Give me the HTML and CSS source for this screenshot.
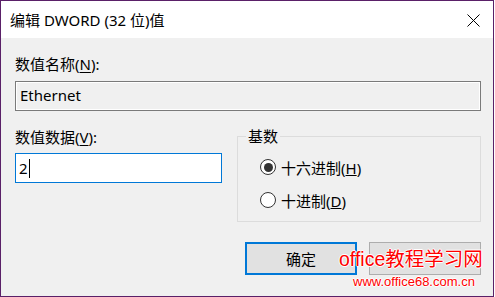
FILE: index.html
```html
<!DOCTYPE html>
<html lang="zh-CN">
<head>
<meta charset="utf-8">
<title>编辑 DWORD (32 位)值</title>
<link rel="stylesheet" href="styles.css">
</head>
<body>
<div class="window">
  <div class="titlebar">
    <span class="title">编辑 DWORD (32 位)值</span>
    <svg class="close" width="13" height="13" viewBox="0 0 13 13"><path d="M0.5 0.5 L12.5 12.5 M12.5 0.5 L0.5 12.5" stroke="#000" stroke-width="1" fill="none"/></svg>
  </div>
  <div class="content">
    <div class="label">数值名称(<u>N</u>):</div>
    <div class="namebox">Ethernet</div>
    <div class="row">
      <div class="left">
        <div class="label label2">数值数据(<u>V</u>):</div>
        <div class="input"><span>2</span><span class="caret"></span></div>
      </div>
      <fieldset class="group">
        <legend>基数</legend>
        <div class="radio"><span class="dot checked"></span><span>十六进制(<u>H</u>)</span></div>
        <div class="radio"><span class="dot"></span><span>十进制(<u>D</u>)</span></div>
      </fieldset>
    </div>
    <div class="buttons">
      <div class="btn primary">确定</div>
      <div class="btn"></div>
    </div>
  </div>
  <div class="watermark">
    <div class="wm1">office教程学习网</div>
    <div class="wm2">www.office68.com.cn</div>
  </div>
</div>
</body>
</html>
```
FILE: styles.css
```css
* { box-sizing: border-box; }
html, body { margin: 0; padding: 0; background: #fff; }
body {
  font-family: "Noto Sans", "Noto Sans CJK SC", sans-serif;
  font-size: 15px;
  color: #000;
}
.window {
  position: relative;
  width: 494px;
  height: 297px;
  border: 1px solid #5a2068;
  display: flex;
  flex-direction: column;
  background: #f0f0f0;
}
.titlebar {
  height: 37px;
  flex: none;
  background: #fff;
  display: flex;
  align-items: center;
  justify-content: space-between;
  padding: 0 13px 0 9px;
}
.title { line-height: 20px; }
.close { display: block; margin-top: 1px; }
.content {
  flex: 1;
  padding: 16px 12px 0 14px;
  display: flex;
  flex-direction: column;
}
.label { line-height: 20px; height: 20px; }
.label u { text-underline-offset: 2px; }
.namebox {
  margin-top: 7px;
  height: 30px;
  border: 1px solid #7a7a7a;
  box-shadow: inset 0 0 0 1px #fff;
  background: #f0f0f0;
  padding-left: 4px;
  line-height: 26px;
}
.row {
  margin-top: 16px;
  display: grid;
  grid-template-columns: 207px 244px;
  column-gap: 15px;
}
.input {
  margin-top: 6px;
  height: 30px;
  border: 1px solid #0078d7;
  background: #fff;
  padding-left: 3px;
  display: flex;
  align-items: center;
}
.caret {
  display: inline-block;
  width: 1px;
  height: 19px;
  background: #000;
  margin-left: 1px;
}
.group {
  margin: -1px 0 0 0;
  padding: 0 0 0 22px;
  height: 96px;
  border: 1px solid #dcdcdc;
  min-width: 0;
}
.group legend {
  padding: 0 2px;
  line-height: 20px;
  margin-left: -14px;
}
.radio {
  display: flex;
  align-items: center;
  height: 20px;
  gap: 5px;
}
.radio:first-of-type { margin-top: 11px; }
.radio + .radio { margin-top: 13px; }
.dot {
  width: 16px;
  height: 16px;
  border-radius: 50%;
  border: 1px solid #333;
  background: #fff;
  display: inline-flex;
  align-items: center;
  justify-content: center;
}
.dot.checked::after {
  content: "";
  width: 9px;
  height: 9px;
  border-radius: 50%;
  background: #333;
}
.buttons {
  margin-top: 20px;
  display: flex;
  justify-content: flex-end;
  gap: 12px;
}
.btn {
  width: 112px;
  height: 33px;
  background: #e1e1e1;
  border: 1px solid #adadad;
  display: flex;
  align-items: center;
  justify-content: center;
}
.btn.primary { border: 2px solid #0078d7; }
.watermark {
  position: absolute;
  left: 338px;
  top: 245px;
  color: #ff0000;
  font-family: "Liberation Sans", "Noto Sans CJK SC", sans-serif;
  text-shadow: 1px 0 0 #fff, -1px 0 0 #fff, 0 1px 0 #fff, 0 -1px 0 #fff;
}
.wm1 { font-size: 19.5px; line-height: 26px; }
.wm2 { font-size: 13px; line-height: 16px; margin-left: 14px; margin-top: 2px; }
```
